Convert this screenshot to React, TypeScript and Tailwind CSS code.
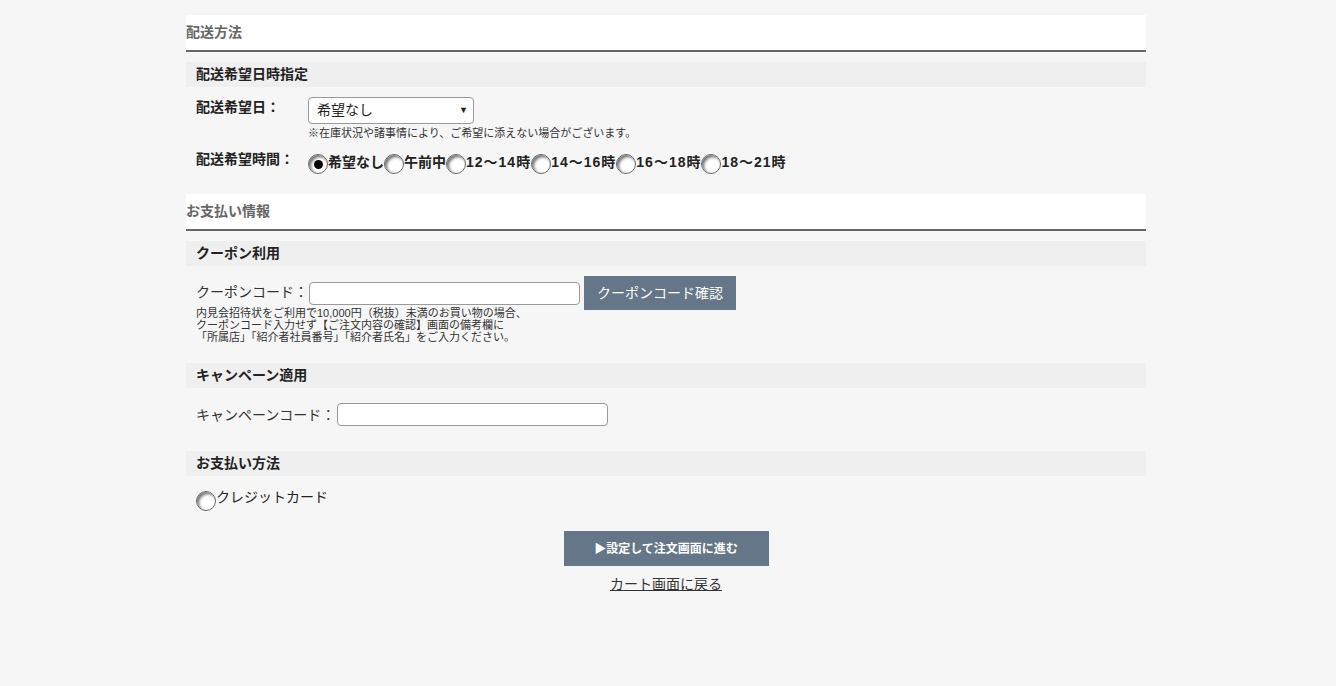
import type { FC, ReactNode } from 'react'

const font = "font-['Liberation_Sans','Noto_Sans_CJK_JP',sans-serif]"

const SectionTitle: FC<{ children: ReactNode }> = ({ children }) => (
  <div className="flex h-[37px] items-center border-b-2 border-[#666] bg-white text-[14px] font-bold text-[#666]">
    {children}
  </div>
)

const SubTitle: FC<{ children: ReactNode }> = ({ children }) => (
  <div className="flex h-[25px] items-center bg-[#efefef] px-[10px] text-[14px] font-bold text-[#222]">
    {children}
  </div>
)

const Radio: FC<{ checked?: boolean }> = ({ checked }) => (
  <span className="relative flex h-[20px] w-[20px] shrink-0 items-center justify-center rounded-full border border-[#666] bg-white shadow-[inset_2px_2px_3px_rgba(0,0,0,0.55)]">
    {checked && <span className="h-[9px] w-[9px] rounded-full bg-black" />}
  </span>
)

const times = ['希望なし', '午前中', '12～14時', '14～16時', '16～18時', '18～21時']

export default function App() {
  return (
    <div className={`${font} min-h-[686px] bg-[#f6f6f6] pt-[15px] text-[#222]`}>
      <div className="ml-[186px] w-[960px]">
        <SectionTitle>配送方法</SectionTitle>
        <div className="mt-[10px]">
          <SubTitle>配送希望日時指定</SubTitle>
        </div>

        {/* delivery date */}
        <div className="mt-[10px] flex px-[10px]">
          <div className="w-[112px] text-[14px] font-bold leading-[20px]">配送希望日：</div>
          <div>
            <div className="flex h-[27px] w-[166px] items-center justify-between rounded-[4px] border border-[#999] bg-white pl-[8px] pr-[5px] text-[14px]">
              <span>希望なし</span>
              <span className="text-[9px]">▼</span>
            </div>
            <div className="mt-[2px] text-[11px] leading-[14px] text-[#333]">
              ※在庫状況や諸事情により、ご希望に添えない場合がございます。
            </div>
          </div>
        </div>

        {/* delivery time */}
        <div className="mt-[9px] flex px-[10px]">
          <div className="w-[112px] text-[14px] font-bold leading-[20px]">配送希望時間：</div>
          <div className="flex items-start pt-[5px]">
            {times.map((t, i) => (
              <label key={t} className="flex items-start text-[14px] font-bold leading-[16px]">
                <Radio checked={i === 0} />
                <span className={i > 1 ? 'tracking-[1px]' : ''}>{t}</span>
              </label>
            ))}
          </div>
        </div>

        <div className="mt-[20px]">
          <SectionTitle>お支払い情報</SectionTitle>
        </div>
        <div className="mt-[10px]">
          <SubTitle>クーポン利用</SubTitle>
        </div>

        {/* coupon */}
        <div className="mt-[10px] flex h-[31px] items-start px-[10px]">
          <span className="mt-[6px] text-[14px] leading-[20px] text-[#333]">クーポンコード：</span>
          <div className="ml-[1px] mt-[6px] h-[23px] w-[271px] rounded-[4px] border border-[#999] bg-white" />
          <button className="ml-[4px] flex h-[34px] w-[152px] items-center justify-center bg-[#647687] text-[14px] text-white">
            クーポンコード確認
          </button>
        </div>
        <div className="px-[10px] text-[11px] leading-[12px] text-[#333]">
          <div>内見会招待状をご利用で10,000円（税抜）未満のお買い物の場合、</div>
          <div>クーポンコード入力せず【ご注文内容の確認】画面の備考欄に</div>
          <div>「所属店」「紹介者社員番号」「紹介者氏名」をご入力ください。</div>
        </div>

        <div className="mt-[20px]">
          <SubTitle>キャンペーン適用</SubTitle>
        </div>
        <div className="mt-[15px] flex items-center px-[10px]">
          <span className="text-[14px] leading-[20px] text-[#333]">キャンペーンコード：</span>
          <div className="ml-[2px] h-[23px] w-[271px] rounded-[4px] border border-[#999] bg-white" />
        </div>

        <div className="mt-[25px]">
          <SubTitle>お支払い方法</SubTitle>
        </div>
        <div className="mt-[13px] flex items-start px-[10px]">
          <div className="mt-[2px]">
            <Radio />
          </div>
          <span className="text-[14px] leading-[16px]">クレジットカード</span>
        </div>

        <div className="mt-[20px] flex flex-col items-center">
          <button className="flex h-[35px] w-[205px] items-center justify-center bg-[#647687] text-[12px] font-bold text-white">
            ▶設定して注文画面に進む
          </button>
          <a className="mt-[8px] text-[14px] leading-[20px] text-[#333] underline">カート画面に戻る</a>
        </div>
      </div>
    </div>
  )
}
